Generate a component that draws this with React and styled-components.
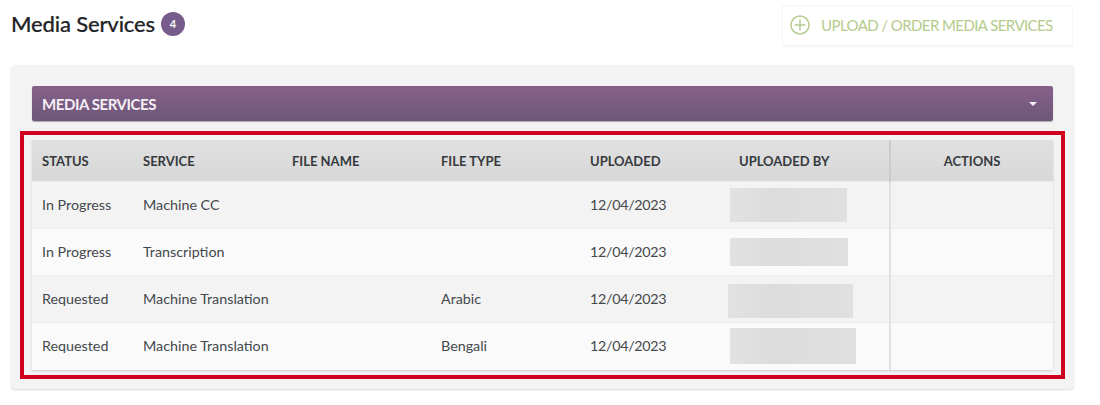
import React from "react";
import styled, { createGlobalStyle } from "styled-components";

const rows = [
  { status: "In Progress", service: "Machine CC", type: "", date: "12/04/2023", blur: { w: 117, h: 34, x: 1, y: 0 } },
  { status: "In Progress", service: "Transcription", type: "", date: "12/04/2023", blur: { w: 118, h: 28, x: 1, y: 0 } },
  { status: "Requested", service: "Machine Translation", type: "Arabic", date: "12/04/2023", blur: { w: 125, h: 34, x: -1, y: 4 } },
  { status: "Requested", service: "Machine Translation", type: "Bengali", date: "12/04/2023", blur: { w: 126, h: 36, x: 1, y: 0 } },
];

const GlobalStyle = createGlobalStyle`
  html, body {
    margin: 0;
    background: #fff;
    font-family: Lato, "Open Sans", sans-serif;
  }
`;

const Page = styled.div`
  width: 1100px;
  height: 405px;
  padding: 5px 26px 0 11px;
  box-sizing: border-box;
  overflow: hidden;
`;

const TopBar = styled.div`
  display: flex;
  justify-content: space-between;
  align-items: flex-start;
  height: 60px;
`;

const Title = styled.h1`
  display: flex;
  align-items: center;
  gap: 6px;
  margin: 5px 0 0;
  font-size: 22px;
  font-weight: 500;
  letter-spacing: -0.15px;
  line-height: 28px;
  color: #1f2428;
  -webkit-text-stroke: 0.2px #1f2428;
`;

const Badge = styled.span`
  display: flex;
  align-items: center;
  justify-content: center;
  width: 24px;
  height: 24px;
  border-radius: 50%;
  background: #775b8c;
  color: #fff;
  font-size: 11px;
  font-weight: 700;
  -webkit-text-stroke: 0;
`;

const UploadButton = styled.button`
  display: flex;
  align-items: center;
  gap: 11px;
  width: 291px;
  height: 41px;
  margin-right: 1px;
  padding: 0 0 2px 7px;
  box-sizing: border-box;
  border: 1px solid #f6f6f4;
  border-radius: 2px;
  background: #fff;
  box-shadow: 0 1px 2px rgba(0, 0, 0, 0.04);
  color: #b4cb8b;
  font-family: inherit;
  font-size: 15px;
  letter-spacing: -0.58px;
`;

const Panel = styled.section`
  padding: 21px 21px 11px;
  height: 324px;
  box-sizing: border-box;
  border-radius: 4px;
  background: #f3f3f3;
  box-shadow: 0 1px 2px rgba(0, 0, 0, 0.15);
`;

const AccordionBar = styled.div`
  display: flex;
  align-items: center;
  justify-content: space-between;
  height: 35px;
  padding: 0 16px 0 10px;
  box-sizing: border-box;
  border-radius: 2px;
  background: linear-gradient(#876089, #6d5779);
  box-shadow: 0 1px 1px rgba(0, 0, 0, 0.3);
  color: #f4eff5;
  font-size: 15px;
  font-weight: 700;
  letter-spacing: -0.42px;
`;

const Caret = styled.span`
  width: 0;
  height: 0;
  border-left: 4px solid transparent;
  border-right: 4px solid transparent;
  border-top: 4px solid #f4eff5;
`;

const HighlightFrame = styled.div`
  margin: 10px -12px 0;
  padding: 5px 8px;
  border: 4px solid #d0021f;
`;

const Table = styled.table`
  width: 1021px;
  table-layout: fixed;
  border-collapse: collapse;
  box-shadow: 0 1px 2px rgba(0, 0, 0, 0.16);
  font-size: 14.3px;
  color: #44484c;
`;

const HeadCell = styled.th`
  height: 41px;
  padding: 0 0 0 ${(p) => (p.$center ? 0 : 10)}px;
  background: linear-gradient(#e0e0e0, #d8d8d8);
  border-left: ${(p) => (p.$divided ? "2px solid #cbcbcb" : "none")};
  color: #363a3e;
  font-size: 13px;
  font-weight: 700;
  text-align: ${(p) => (p.$center ? "center" : "left")};
`;

const Row = styled.tr`
  height: 47px;
  background: ${(p) => (p.$odd ? "#f3f3f3" : "#fafafa")};
  border-top: 1px solid #ececec;
`;

const Cell = styled.td`
  padding: 0 0 2px 10px;
  border-left: ${(p) => (p.$divided ? "2px solid #e2e2e2" : "none")};
`;

const DateCell = styled(Cell)`
  letter-spacing: -0.3px;
`;

const BlurCell = styled.td`
  padding: 0;
`;

const BlurPatch = styled.div`
  width: ${(p) => p.$w}px;
  height: ${(p) => p.$h}px;
  margin-left: ${(p) => p.$x}px;
  margin-top: ${(p) => p.$y}px;
  background: linear-gradient(90deg, #e2e2e2, #dcdcdc 35%, #e0e0e0);
`;

const PlusIcon = () => (
  <svg width="20" height="20" viewBox="0 0 20 20" fill="none" stroke="#b4cb8b" strokeWidth="1.5">
    <circle cx="10" cy="10" r="9" />
    <path d="M10 4.5v11M4.5 10h11" />
  </svg>
);

export default function App() {
  return (
    <>
      <GlobalStyle />
      <Page>
        <TopBar>
          <Title>
            Media Services <Badge>4</Badge>
          </Title>
          <UploadButton>
            <PlusIcon />
            UPLOAD / ORDER MEDIA SERVICES
          </UploadButton>
        </TopBar>
        <Panel>
          <AccordionBar>
            MEDIA SERVICES
            <Caret />
          </AccordionBar>
          <HighlightFrame>
            <Table>
              <colgroup>
                <col width="101" />
                <col width="149" />
                <col width="149" />
                <col width="149" />
                <col width="149" />
                <col width="161" />
                <col width="163" />
              </colgroup>
              <thead>
                <tr>
                  <HeadCell>STATUS</HeadCell>
                  <HeadCell>SERVICE</HeadCell>
                  <HeadCell>FILE NAME</HeadCell>
                  <HeadCell>FILE TYPE</HeadCell>
                  <HeadCell>UPLOADED</HeadCell>
                  <HeadCell>UPLOADED BY</HeadCell>
                  <HeadCell $center $divided>ACTIONS</HeadCell>
                </tr>
              </thead>
              <tbody>
                {rows.map((row, i) => (
                  <Row key={i} $odd={i % 2 === 0}>
                    <Cell>{row.status}</Cell>
                    <Cell>{row.service}</Cell>
                    <Cell />
                    <Cell>{row.type}</Cell>
                    <DateCell>{row.date}</DateCell>
                    <BlurCell>
                      <BlurPatch $w={row.blur.w} $h={row.blur.h} $x={row.blur.x} $y={row.blur.y} />
                    </BlurCell>
                    <Cell $divided />
                  </Row>
                ))}
              </tbody>
            </Table>
          </HighlightFrame>
        </Panel>
      </Page>
    </>
  );
}
